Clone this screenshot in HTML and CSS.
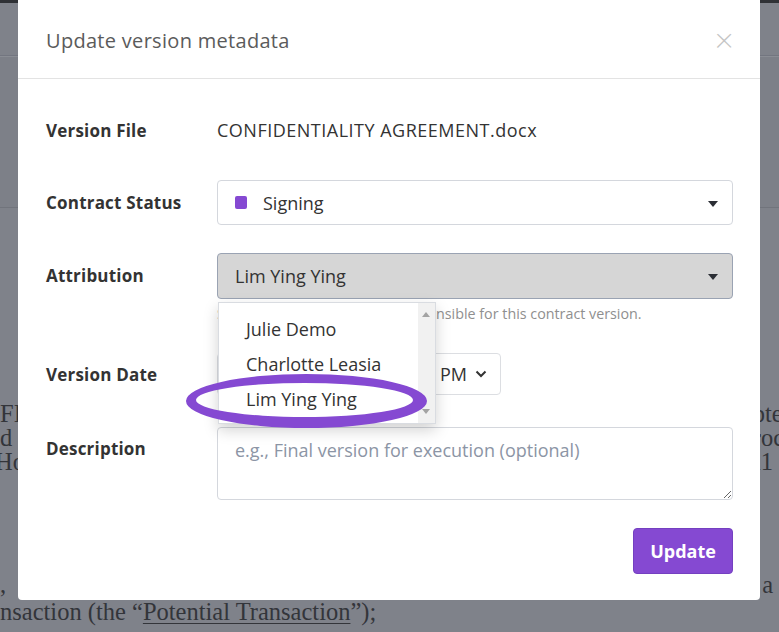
FILE: index.html
```html
<!DOCTYPE html>
<html lang="en">
<head>
    <meta charset="UTF-8">
    <meta name="viewport" content="width=device-width, initial-scale=1.0">
    <title>Update version metadata</title>
    <link rel="stylesheet" href="styles.css">
</head>
<body>
    <div class="page">
        <div class="topbar"></div>
        <div class="toolbar"></div>
        <div class="subbar"></div>
        <div class="doc">
            <div class="doc-line"><span>FI</span><span class="right">pted</span></div>
            <div class="doc-line"><span>d</span><span class="right">roce</span></div>
            <div class="doc-line"><span class="cut">Ho</span><span class="right-short">11</span></div>
            <div class="doc-gap"></div>
            <div class="doc-line"><span>,</span><span class="right-short">a</span></div>
            <div class="doc-line"><span>nsaction (the “<u>Potential Transaction</u>”);</span></div>
        </div>
    </div>

    <div class="modal">
        <div class="modal-header">
            <h2 class="modal-title">Update version metadata</h2>
            <button class="close">&times;</button>
        </div>
        <div class="modal-body">
            <div class="row row-file">
                <div class="label">Version File</div>
                <div class="value">CONFIDENTIALITY AGREEMENT.docx</div>
            </div>
            <div class="row row-status">
                <div class="label">Contract Status</div>
                <div class="select">
                    <span class="swatch"></span>
                    <span>Signing</span>
                    <span class="caret"></span>
                </div>
            </div>
            <div class="row row-attr">
                <div class="label">Attribution</div>
                <div class="field">
                    <div class="select select-open">
                        <span>Lim Ying Ying</span>
                        <span class="caret"></span>
                    </div>
                    <div class="help">Select the person who was responsible for this contract version.</div>
                </div>
            </div>
            <div class="row row-date">
                <div class="label">Version Date</div>
                <div class="date-fields">
                    <div class="date-box">08/14/2024</div>
                    <div class="time-box">10:30</div>
                    <div class="time-box ampm">PM
                        <svg width="12" height="8" viewBox="0 0 12 8"><path d="M1.5 1.5 L6 6 L10.5 1.5" fill="none" stroke="#333" stroke-width="2"/></svg>
                    </div>
                </div>
            </div>
            <div class="row row-desc">
                <div class="label">Description</div>
                <textarea class="textarea" placeholder="e.g., Final version for execution (optional)"></textarea>
            </div>
            <div class="footer">
                <button class="btn-update">Update</button>
            </div>
        </div>

        <div class="dropdown">
            <div class="options">
                <div class="option">Julie Demo</div>
                <div class="option">Charlotte Leasia</div>
                <div class="option">Lim Ying Ying</div>
            </div>
            <div class="scrollbar">
                <span class="arrow-up"></span>
                <span class="arrow-down"></span>
            </div>
        </div>

        <!-- hand drawn highlight ring -->
        <svg class="circle" width="250" height="64" viewBox="0 0 250 64">
            <path fill="#8549d2" fill-rule="evenodd" d="M2 31 a120.5 27 0 1 0 241 0 a120.5 27 0 1 0 -241 0 Z M12 30 a108.5 17 0 1 0 217 0 a108.5 17 0 1 0 -217 0 Z"/>
        </svg>
    </div>
</body>
</html>
```

FILE: styles.css
```css
body {
    margin: 0;
    width: 779px;
    height: 632px;
    overflow: hidden;
    position: relative;
    background-color: #7f828a;
    font-family: 'Open Sans', 'Lato', sans-serif;
}

.page {
    height: 632px;
}

.topbar {
    height: 3px;
    background: #2f3135;
}

.toolbar {
    height: 52px;
    border-bottom: 1px solid #737680;
}

.subbar {
    height: 150px;
    border-top: 1px solid #8a8d94;
    border-bottom: 1px solid #71747c;
    background: #7d8088;
}

.doc {
    padding-top: 194px;
    font-family: 'Liberation Serif', serif;
    font-size: 24.5px;
    color: #33353a;
}

.doc-line {
    display: flex;
    justify-content: space-between;
    line-height: 24px;
    white-space: nowrap;
}

.doc-line .right {
    margin-right: -16px;
}

.doc-line .right-short {
    margin-right: 6px;
}

.doc-line .cut {
    margin-left: -5px;
}

.doc-gap {
    height: 99px;
}

.doc-line:last-child {
    line-height: 30px;
}

.doc-line u {
    text-decoration-thickness: 1px;
    text-underline-offset: 3px;
}

/* modal */
.modal {
    position: absolute;
    left: 18px;
    top: 0;
    width: 742px;
    height: 600px;
    background: #fff;
    border-radius: 0 0 4px 4px;
}

.modal-header {
    height: 78px;
    border-bottom: 1px solid #e3e3e3;
    display: flex;
    align-items: center;
    justify-content: space-between;
    padding: 0 26px 0 28px;
}

.modal-title {
    margin: 2px 0 0 0;
    font-size: 20px;
    font-weight: 400;
    letter-spacing: 0.3px;
    color: #5b5b5b;
}

.close {
    border: none;
    background: transparent;
    font-size: 34px;
    font-weight: 300;
    color: #c4c4c4;
    padding: 0;
    line-height: 1;
    font-family: 'Lato', sans-serif;
}

.modal-body {
    padding: 39px 27px 0 28px;
}

.row {
    display: grid;
    grid-template-columns: 171px 1fr;
    align-items: center;
}

.label {
    font-size: 17px;
    font-weight: 700;
    letter-spacing: 0.2px;
    color: #333;
}

.value {
    font-size: 18px;
    letter-spacing: 0.5px;
    color: #333;
    line-height: 24px;
}

.row-file {
    margin-bottom: 38px;
}

.row-status {
    margin-bottom: 28px;
}

.row-attr {
    align-items: start;
    margin-bottom: 30px;
}

.row-attr .label {
    line-height: 46px;
}

.row-date {
    margin-bottom: 32px;
}

.row-desc {
    align-items: start;
    margin-bottom: 28px;
}

.row-desc .label {
    padding-top: 10px;
}

.select {
    height: 45px;
    box-sizing: border-box;
    border: 1px solid #d4d7dd;
    border-radius: 4px;
    display: flex;
    align-items: center;
    padding: 0 17px;
    font-size: 18px;
    color: #333;
    position: relative;
}

.select-open {
    height: 46px;
    background: #d6d6d6;
    border-color: #9aa3b3;
}

.swatch {
    width: 12px;
    height: 13px;
    border-radius: 2px;
    background: #8549d2;
    margin-right: 16px;
}

.caret {
    position: absolute;
    right: 14px;
    top: 20px;
    border-left: 5px solid transparent;
    border-right: 5px solid transparent;
    border-top: 6px solid #2b2e35;
}

.help {
    margin-top: 5px;
    font-size: 14.3px;
    line-height: 19px;
    color: #8f8f8f;
}

.date-fields {
    display: flex;
    gap: 10px;
}

.date-box,
.time-box {
    height: 42px;
    box-sizing: border-box;
    border: 1px solid #dcdee2;
    border-radius: 4px;
    display: flex;
    align-items: center;
    padding: 0 12px;
    font-size: 18px;
    color: #333;
}

.date-box {
    width: 120px;
}

.time-box {
    width: 70px;
}

.ampm {
    width: 74px;
    gap: 8px;
}

.textarea {
    height: 73px;
    box-sizing: border-box;
    border: 1px solid #d4d7dd;
    border-radius: 4px;
    padding: 10px 17px;
    font-family: 'Open Sans', sans-serif;
    font-size: 18px;
    resize: vertical;
    margin: 0;
}

.textarea::placeholder {
    color: #8c95a5;
}

.footer {
    display: flex;
    justify-content: flex-end;
}

.btn-update {
    width: 100px;
    height: 46px;
    border: 1px solid #7440c0;
    border-radius: 4px;
    background: #8549d2;
    color: #fff;
    font-family: 'Open Sans', sans-serif;
    font-size: 18px;
    font-weight: 700;
}

/* open dropdown list */
.dropdown {
    position: absolute;
    left: 200px;
    top: 302px;
    width: 218px;
    height: 122px;
    box-sizing: border-box;
    background: #fff;
    border: 1px solid #d9dce1;
    box-shadow: 0 6px 14px rgba(0, 0, 0, 0.18);
    display: flex;
}

.options {
    flex: 1;
    padding-top: 9px;
}

.option {
    height: 35px;
    line-height: 35px;
    padding-left: 27px;
    font-size: 18px;
    color: #333;
}

.scrollbar {
    width: 17px;
    background: #f1f1f1;
    position: relative;
}

.arrow-up,
.arrow-down {
    position: absolute;
    left: 4px;
    border-left: 4px solid transparent;
    border-right: 4px solid transparent;
}

.arrow-up {
    top: 9px;
    border-bottom: 5px solid #a3a3a3;
}

.arrow-down {
    bottom: 9px;
    border-top: 5px solid #a3a3a3;
}

.circle {
    position: absolute;
    left: 166px;
    top: 370px;
}
```
